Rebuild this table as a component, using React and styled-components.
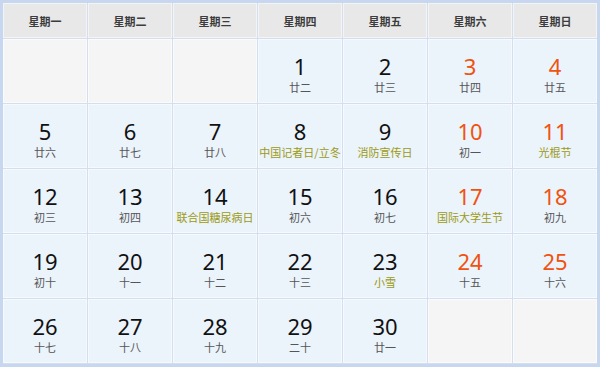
import React from "react";
import styled, { createGlobalStyle } from "styled-components";

const GlobalStyle = createGlobalStyle`
  html, body {
    margin: 0;
    padding: 0;
    background: #ffffff;
  }
`;

const Frame = styled.div`
  width: 600px;
  height: 367px;
  box-sizing: border-box;
  border: 3px solid #c6d7ef;
  background: #d3dfef;
  display: grid;
  grid-template-columns: repeat(7, 1fr);
  grid-template-rows: 35px repeat(5, 64px);
  gap: 1px;
  font-family: "Noto Sans", "Noto Sans CJK SC", sans-serif;
`;

const HeadCell = styled.div`
  background: #e8e8e8;
  border: 1px solid #f4f4f4;
  display: flex;
  align-items: center;
  justify-content: center;
  font-family: "Noto Sans CJK SC", sans-serif;
  font-size: 11px;
  font-weight: 700;
  color: #3c3c3c;
`;

const DayCell = styled.div`
  background: ${(p) => (p.$empty ? "#f5f5f5" : "#ebf3fb")};
  border: 1px solid ${(p) => (p.$empty ? "#fbfbfb" : "#f6fafe")};
  display: flex;
  flex-direction: column;
  align-items: center;
  gap: 2px;
  padding-top: 14px;
  box-sizing: border-box;
`;

const DayNum = styled.span`
  font-size: 22px;
  line-height: 24px;
  color: ${(p) => (p.$weekend ? "#f0520f" : "#111111")};
`;

const Lunar = styled.span`
  font-family: "Noto Sans CJK SC", sans-serif;
  font-size: 11px;
  line-height: 14px;
  color: ${(p) => (p.$festival ? "#9c9a14" : "#555555")};
  white-space: nowrap;
`;

const weekDays = ["星期一", "星期二", "星期三", "星期四", "星期五", "星期六", "星期日"];

const days = [
  null, null, null,
  { n: 1, l: "廿二" },
  { n: 2, l: "廿三" },
  { n: 3, l: "廿四" },
  { n: 4, l: "廿五" },
  { n: 5, l: "廿六" },
  { n: 6, l: "廿七" },
  { n: 7, l: "廿八" },
  { n: 8, l: "中国记者日/立冬", f: true },
  { n: 9, l: "消防宣传日", f: true },
  { n: 10, l: "初一" },
  { n: 11, l: "光棍节", f: true },
  { n: 12, l: "初三" },
  { n: 13, l: "初四" },
  { n: 14, l: "联合国糖尿病日", f: true },
  { n: 15, l: "初六" },
  { n: 16, l: "初七" },
  { n: 17, l: "国际大学生节", f: true },
  { n: 18, l: "初九" },
  { n: 19, l: "初十" },
  { n: 20, l: "十一" },
  { n: 21, l: "十二" },
  { n: 22, l: "十三" },
  { n: 23, l: "小雪", f: true },
  { n: 24, l: "十五" },
  { n: 25, l: "十六" },
  { n: 26, l: "十七" },
  { n: 27, l: "十八" },
  { n: 28, l: "十九" },
  { n: 29, l: "二十" },
  { n: 30, l: "廿一" },
  null, null,
];

export default function App() {
  return (
    <>
      <GlobalStyle />
      <Frame>
        {weekDays.map((w) => (
          <HeadCell key={w}>{w}</HeadCell>
        ))}
        {days.map((d, i) =>
          d ? (
            <DayCell key={i}>
              <DayNum $weekend={i % 7 >= 5}>{d.n}</DayNum>
              <Lunar $festival={d.f}>{d.l}</Lunar>
            </DayCell>
          ) : (
            <DayCell key={i} $empty />
          )
        )}
      </Frame>
    </>
  );
}
